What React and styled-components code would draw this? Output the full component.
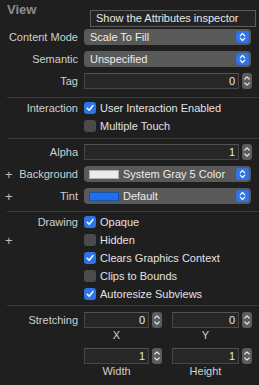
import React from 'react';
import styled, { createGlobalStyle } from 'styled-components';

const Global = createGlobalStyle`
  html, body { margin: 0; padding: 0; background: #1f1f1f; }
  body { font-family: "Liberation Sans", Arial, sans-serif; font-size: 11px; color: #dcdcdc; }
`;

const Panel = styled.div`
  position: relative;
  width: 259px;
  height: 385px;
  background: #1f1f1f;
  overflow: hidden;
`;

const Header = styled.div`
  font-size: 13px;
  font-weight: bold;
  color: #8e8e8e;
  padding: 2px 0 0 7px;
  height: 24px;
  line-height: 16px;
`;

const Tooltip = styled.div`
  position: absolute;
  top: 10px;
  left: 90px;
  width: 166px;
  height: 17px;
  box-sizing: border-box;
  border: 1px solid #5c5c5c;
  background: #242424;
  color: #e8e8e8;
  font-size: 11px;
  line-height: 15px;
  padding-left: 5px;
  white-space: nowrap;
`;

const Section = styled.div`
  padding: ${(p) => p.$top || 0}px 0 ${(p) => p.$bottom || 0}px;
`;

const Divider = styled.div`
  height: 1px;
  margin-left: 7px;
  background: #3a3a3a;
`;

const Row = styled.div`
  display: grid;
  grid-template-columns: 84px 168px;
  align-items: center;
  height: ${(p) => p.$h || 22}px;
`;

const LabelCell = styled.div`
  display: flex;
  align-items: center;
  justify-content: space-between;
  padding-right: 6px;
  white-space: nowrap;
  color: #d0d0d0;
`;

const Plus = styled.span`
  width: 8px;
  margin-left: 5px;
  color: #bdbdbd;
  font-size: 13px;
  line-height: 11px;
`;

const Popup = styled.div`
  display: flex;
  align-items: center;
  width: 167px;
  height: 16px;
  box-sizing: border-box;
  border-radius: 4px;
  background: #595959;
  color: #ececec;
  padding: 0 2px 0 6px;
  position: relative;
`;

const PopupText = styled.span`
  flex: 1;
  white-space: nowrap;
`;

const ArrowBtn = styled.span`
  display: flex;
  width: 13px;
  height: 12px;
  border-radius: 3px;
  background: #2f74e6;
  align-items: center;
  justify-content: center;
`;

const Swatch = styled.span`
  width: 28px;
  height: 7px;
  margin: 0 4px 0 -1px;
  background: ${(p) => p.$color};
  border: 1px solid rgba(0, 0, 0, 0.25);
`;

const FieldGroup = styled.div`
  display: grid;
  grid-template-columns: 1fr 10px;
  column-gap: 3px;
  align-items: center;
`;

const Field = styled.div`
  height: 16px;
  box-sizing: border-box;
  background: #272727;
  border: 1px solid #474747;
  border-top-color: #525252;
  color: #e8e8e8;
  text-align: right;
  padding-right: 3px;
  line-height: 14px;
`;

const StepperBox = styled.span`
  display: block;
  width: 10px;
  height: 16px;
  border-radius: 3px;
  background: #5c5c5c;
`;

const Caption = styled.div`
  text-align: center;
  color: #d0d0d0;
  height: 13px;
  line-height: 13px;
  margin-top: 1px;
`;

const CheckLine = styled.label`
  display: flex;
  align-items: center;
  gap: 4px;
  color: #e2e2e2;
  white-space: nowrap;
`;

const Box = styled.span`
  display: flex;
  align-items: center;
  justify-content: center;
  width: 12px;
  height: 12px;
  border-radius: 3px;
  background: ${(p) => (p.$on ? '#2f74e6' : '#4b4b4b')};
`;

const StretchGrid = styled.div`
  display: grid;
  grid-template-columns: 78px 80px;
  column-gap: 10px;
  row-gap: 6px;
`;

const StretchRow = styled.div`
  display: grid;
  grid-template-columns: 84px 168px;
`;

const StretchLabel = styled.div`
  text-align: right;
  padding-right: 6px;
  color: #d0d0d0;
  line-height: 16px;
`;

const Arrows = () => (
  <svg width="7" height="10" viewBox="0 0 7 10">
    <path d="M1.2 3.8 L3.5 1.5 L5.8 3.8 M1.2 6.2 L3.5 8.5 L5.8 6.2" stroke="#fff" strokeWidth="1.2" fill="none" strokeLinecap="round" strokeLinejoin="round" />
  </svg>
);

const Stepper = () => (
  <StepperBox>
    <svg width="10" height="16" viewBox="0 0 10 16">
      <path d="M2.8 6 L5 3.8 L7.2 6 M2.8 10 L5 12.2 L7.2 10" stroke="#e6e6e6" strokeWidth="1.2" fill="none" strokeLinecap="round" strokeLinejoin="round" />
    </svg>
  </StepperBox>
);

const Check = ({ on, children }) => (
  <CheckLine>
    <Box $on={on}>
      {on && (
        <svg width="10" height="10" viewBox="0 0 10 10">
          <path d="M2.2 5.2 L4.2 7.3 L7.9 2.6" stroke="#fff" strokeWidth="1.5" fill="none" strokeLinecap="round" strokeLinejoin="round" />
        </svg>
      )}
    </Box>
    {children}
  </CheckLine>
);

const Label = ({ plus, children }) => (
  <LabelCell>
    <Plus>{plus ? '+' : ''}</Plus>
    <span>{children}</span>
  </LabelCell>
);

const PopupRow = ({ label, plus, value, swatch }) => (
  <Row>
    <Label plus={plus}>{label}</Label>
    <Popup>
      {swatch && <Swatch $color={swatch} />}
      <PopupText>{value}</PopupText>
      <ArrowBtn><Arrows /></ArrowBtn>
    </Popup>
  </Row>
);

const FieldRow = ({ label, value }) => (
  <Row>
    <Label>{label}</Label>
    <FieldGroup>
      <Field>{value}</Field>
      <Stepper />
    </FieldGroup>
  </Row>
);

const CheckRow = ({ label, plus, on, children }) => (
  <Row $h={18}>
    <Label plus={plus}>{label}</Label>
    <Check on={on}>{children}</Check>
  </Row>
);

const StretchCell = ({ value, caption }) => (
  <div>
    <FieldGroup>
      <Field>{value}</Field>
      <Stepper />
    </FieldGroup>
    <FieldGroup>
      <Caption>{caption}</Caption>
    </FieldGroup>
  </div>
);

export default function App() {
  return (
    <Panel>
      <Global />
      <Header>View</Header>
      <Section $bottom={5}>
        <PopupRow label="Content Mode" value="Scale To Fill" />
        <PopupRow label="Semantic" value="Unspecified" />
        <FieldRow label="Tag" value="0" />
      </Section>
      <Divider />
      <Section $top={1} $bottom={3}>
        <CheckRow label="Interaction" on>User Interaction Enabled</CheckRow>
        <CheckRow>Multiple Touch</CheckRow>
      </Section>
      <Divider />
      <Section $top={2} $bottom={4}>
        <FieldRow label="Alpha" value="1" />
        <PopupRow label="Background" plus swatch="#ececec" value="System Gray 5 Color" />
        <PopupRow label="Tint" plus swatch="#1f6fe6" value="Default" />
      </Section>
      <Divider />
      <Section $top={1} $bottom={2}>
        <CheckRow label="Drawing" on>Opaque</CheckRow>
        <CheckRow plus>Hidden</CheckRow>
        <CheckRow on>Clears Graphics Context</CheckRow>
        <CheckRow>Clips to Bounds</CheckRow>
        <CheckRow on>Autoresize Subviews</CheckRow>
      </Section>
      <Divider />
      <Section $top={6}>
        <StretchRow>
          <StretchLabel>Stretching</StretchLabel>
          <StretchGrid>
            <StretchCell value="0" caption="X" />
            <StretchCell value="0" caption="Y" />
            <StretchCell value="1" caption="Width" />
            <StretchCell value="1" caption="Height" />
          </StretchGrid>
        </StretchRow>
      </Section>
      <Tooltip>Show the Attributes inspector</Tooltip>
    </Panel>
  );
}
